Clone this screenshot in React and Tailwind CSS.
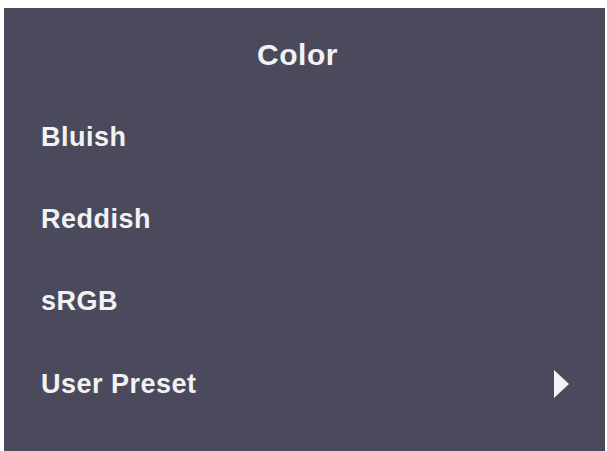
import React from "react";

const items = ["Bluish", "Reddish", "sRGB", "User Preset"];

const App = () => {
  return (
    <div className="w-[607px] h-[451px] bg-white pt-[8px] pl-[4px] pr-[2px] font-['Liberation_Sans',Arial,sans-serif]">
      <div className="h-full bg-[#4b4a5d] flex flex-col pt-[32px] text-[#f2f2f4] font-bold">
        {/* Title */}
        <div className="text-[30px] leading-[30px] tracking-[0.5px] text-center pr-[14px]">Color</div>

        {/* Menu rows */}
        <div className="mt-[54px] flex flex-col gap-[55px] pl-[37px] pr-[36px]">
          {items.map((item) => (
            <div key={item} className="flex items-center justify-between text-[27px] leading-[27px] tracking-[0.5px]">
              <span>{item}</span>
              {item === "User Preset" && (
                <svg width="15" height="28" viewBox="0 0 15 28" className="block">
                  <polygon points="0,0 15,14 0,28" fill="#f4f4f6" />
                </svg>
              )}
            </div>
          ))}
        </div>
      </div>
    </div>
  );
};

export default App;
